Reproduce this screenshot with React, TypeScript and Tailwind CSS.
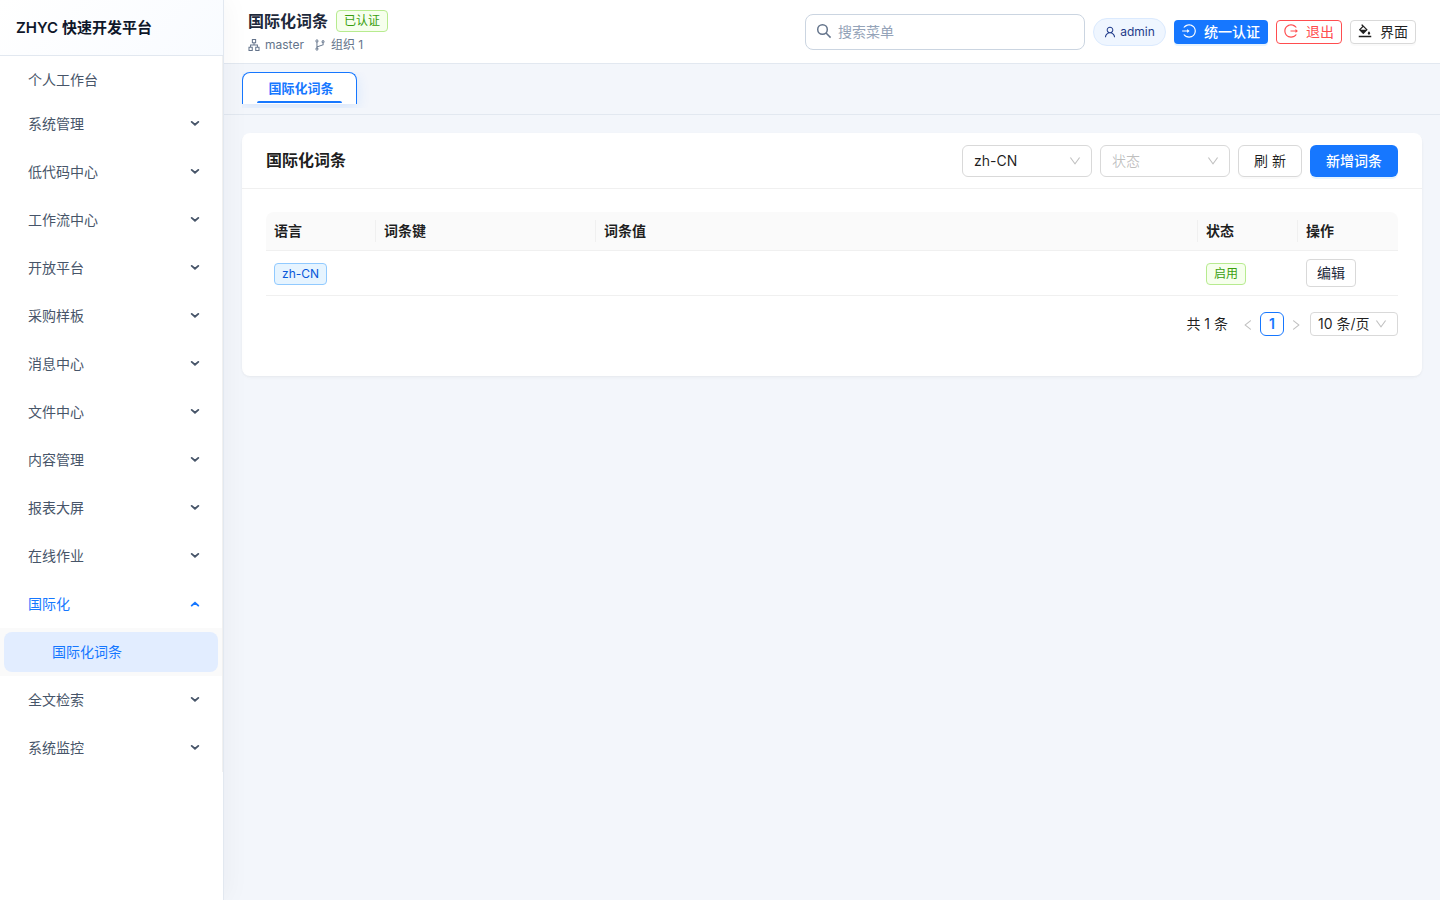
import React from "react";
import type { IconType } from "react-icons";
import {
  AiOutlineApartment,
  AiOutlineBgColors,
  AiOutlineBranches,
  AiOutlineDown,
  AiOutlineLeft,
  AiOutlineLogin,
  AiOutlineLogout,
  AiOutlineRight,
  AiOutlineSearch,
  AiOutlineUser,
} from "react-icons/ai";

const groupsBefore = [
  "系统管理",
  "低代码中心",
  "工作流中心",
  "开放平台",
  "采购样板",
  "消息中心",
  "文件中心",
  "内容管理",
  "报表大屏",
  "在线作业",
];
const groupsAfter = ["全文检索", "系统监控"];

function Icon({ as: Glyph, className }: { as: IconType; className: string }) {
  return <Glyph viewBox="64 64 896 896" className={className} />;
}

function Chevron({ up = false }: { up?: boolean }) {
  return (
    <svg width="10" height="10" viewBox="0 0 10 10" fill="none" stroke="currentColor" strokeWidth="1.9" strokeLinecap="round">
      <path d={up ? "M1.7 6.6 5 3.7 8.3 6.6" : "M1.7 2.9 5 5.8 8.3 2.9"} />
    </svg>
  );
}

function MenuGroup({ label, open = false }: { label: string; open?: boolean }) {
  return (
    <li className={`my-1 mx-1 flex h-10 items-center justify-between pl-6 pr-[18px] ${open ? "text-[#1677ff]" : "text-[#475569]"}`}>
      <span>{label}</span>
      <Chevron up={open} />
    </li>
  );
}

function Sidebar() {
  return (
    <aside className="relative z-10 flex w-56 shrink-0 flex-col border-r border-[#e2e8f0] bg-white shadow-[4px_0_24px_rgba(15,23,42,0.04)]">
      <div className="flex h-14 shrink-0 items-center border-b border-[#e2e8f0] bg-linear-135 from-white to-[#f8fbff] px-4 text-[15px] font-semibold text-[#0f172a]">
        ZHYC 快速开发平台
      </div>
      <ul className="flex flex-col border-r border-[#f0f0f0]">
        <li className="mx-1 mt-1 flex h-10 items-center pl-6 text-[#475569]">个人工作台</li>
        {groupsBefore.map((g) => (
          <MenuGroup key={g} label={g} />
        ))}
        <MenuGroup label="国际化" open />
        <li className="bg-[#fafafa] px-1 py-1">
          <div className="flex h-10 items-center rounded-lg bg-[#e2edff] pl-12 text-[#1677ff]">国际化词条</div>
        </li>
        {groupsAfter.map((g) => (
          <MenuGroup key={g} label={g} />
        ))}
      </ul>
    </aside>
  );
}

function Header() {
  return (
    <header className="flex h-16 shrink-0 items-center justify-between border-b border-[#e2e8f0] bg-white px-6">
      <div className="flex flex-col">
        <div className="flex h-[22px] items-center gap-2">
          <h1 className="text-base leading-[22px] font-semibold text-[#1e293b]">国际化词条</h1>
          <span className="rounded border border-[#b7eb8f] bg-[#f6ffed] px-[7px] text-xs leading-5 text-[#389e0d]">已认证</span>
        </div>
        <div className="mt-1 flex h-[18px] items-center text-xs text-[#64748b]">
          <Icon as={AiOutlineApartment} className="size-3" />
          <span className="ml-[5px]">master</span>
          <Icon as={AiOutlineBranches} className="ml-2.5 size-3" />
          <span className="ml-[5px]">组织 1</span>
        </div>
      </div>
      <div className="flex items-center gap-2">
        <div className="flex h-9 w-[280px] items-center gap-[7px] rounded-lg border border-[#cbd5e1] bg-white px-2.5">
          <svg viewBox="0 0 16 16" className="mb-px size-4 text-[#64748b]" fill="none" stroke="currentColor" strokeWidth="1.5">
            <circle cx="6.5" cy="6.5" r="4.8" />
            <path d="m10 10 4.6 4.6" />
          </svg>
          <span className="-ml-px text-[#94a3b8]">搜索菜单</span>
        </div>
        <div className="flex h-7 w-[73px] items-center justify-center gap-1 rounded-full border border-[#dbeafe] bg-[#eff6ff] text-xs text-[#1e3a8a]">
          <Icon as={AiOutlineUser} className="size-3" />
          <span>admin</span>
        </div>
        <button className="flex h-6 w-[94px] items-center justify-center gap-2 rounded bg-[#1677ff] font-medium text-white shadow-[0_2px_0_rgba(5,145,255,0.1)]">
          <Icon as={AiOutlineLogin} className="mb-0.5 size-3.5" />
          <span>统一认证</span>
        </button>
        <button className="flex h-6 w-[66px] items-center justify-center gap-2 rounded border border-[#ff4d4f] bg-white text-[#ff4d4f]">
          <Icon as={AiOutlineLogout} className="mb-0.5 size-3.5" />
          <span>退出</span>
        </button>
        <button className="flex h-6 w-[66px] items-center justify-center gap-2 rounded border border-[#d9d9d9] bg-white text-black/88 shadow-[0_2px_0_rgba(0,0,0,0.02)]">
          <Icon as={AiOutlineBgColors} className="mb-0.5 size-3.5" />
          <span>界面</span>
        </button>
      </div>
    </header>
  );
}

function Select({ text, muted = false }: { text: string; muted?: boolean }) {
  return (
    <div className="flex h-8 w-[130px] items-center justify-between rounded-md border border-[#d9d9d9] bg-white pl-[11px] pr-2.5">
      <span className={muted ? "text-black/25" : "text-black/88"}>{text}</span>
      <Icon as={AiOutlineDown} className="size-3 text-black/25" />
    </div>
  );
}

function HeadCell({ text, last = false }: { text: string; last?: boolean }) {
  return (
    <div className="flex h-full items-center justify-between pl-2">
      <span>{text}</span>
      {!last && <i className="h-[22px] w-px bg-[#f0f0f0]" />}
    </div>
  );
}

function EntriesCard() {
  return (
    <section className="m-[18px] h-[243px] rounded-lg bg-white shadow-[0_1px_2px_rgba(0,0,0,0.03),0_1px_6px_-1px_rgba(0,0,0,0.02),0_2px_4px_rgba(0,0,0,0.02)]">
      <div className="flex h-14 items-center justify-between border-b border-[#f0f0f0] px-6">
        <h2 className="pb-0.5 text-base font-semibold text-black/88">国际化词条</h2>
        <div className="flex gap-2">
          <Select text="zh-CN" />
          <Select text="状态" muted />
          <button className="h-8 w-16 rounded-md border border-[#d9d9d9] bg-white text-black/88 shadow-[0_2px_0_rgba(0,0,0,0.02)]">刷 新</button>
          <button className="h-8 w-[88px] rounded-md bg-[#1677ff] font-medium text-white shadow-[0_2px_0_rgba(5,145,255,0.1)]">新增词条</button>
        </div>
      </div>
      <div className="px-6 pt-[23px]">
        <div className="grid h-[39px] grid-cols-[110px_220px_602px_100px_100px] items-center rounded-t-lg border-b border-[#f0f0f0] bg-[#fafafa] font-semibold text-black/88">
          <HeadCell text="语言" />
          <HeadCell text="词条键" />
          <HeadCell text="词条值" />
          <HeadCell text="状态" />
          <HeadCell text="操作" last />
        </div>
        <div className="grid h-[45px] grid-cols-[110px_220px_602px_100px_100px] items-center border-b border-[#f0f0f0]">
          <div className="flex pl-2 pt-0.5">
            <span className="rounded border border-[#91caff] bg-[#e6f4ff] px-[7px] text-xs leading-5 text-[#0958d9]">zh-CN</span>
          </div>
          <div />
          <div />
          <div className="flex pl-2 pt-0.5">
            <span className="rounded border border-[#b7eb8f] bg-[#f6ffed] px-[7px] text-xs leading-5 text-[#389e0d]">启用</span>
          </div>
          <div className="pl-2">
            <button className="block h-7 w-[50px] rounded border border-[#d9d9d9] bg-white text-[#1e293b]">编辑</button>
          </div>
        </div>
        <div className="mt-4 flex h-6 items-center justify-end text-black/88">
          <span className="mr-2">共 1 条</span>
          <span className="flex size-6 items-center justify-center pt-0.5 text-black/25">
            <Icon as={AiOutlineLeft} className="size-3" />
          </span>
          <span className="flex size-6 items-center justify-center rounded-md border border-[#1677ff] bg-white font-semibold text-[#1677ff]">1</span>
          <span className="flex size-6 items-center justify-center pt-0.5 text-black/25">
            <Icon as={AiOutlineRight} className="size-3" />
          </span>
          <div className="ml-0.5 flex h-6 w-[88px] items-center justify-between rounded border border-[#d9d9d9] pl-[7px] pr-2.5">
            <span>10 条/页</span>
            <Icon as={AiOutlineDown} className="size-3 text-black/25" />
          </div>
        </div>
      </div>
    </section>
  );
}

export default function App() {
  return (
    <div className="flex h-screen w-screen overflow-hidden bg-[#f3f6fb] font-['Inter','Noto_Sans_CJK_SC',sans-serif] text-sm">
      <Sidebar />
      <div className="flex min-w-0 flex-1 flex-col">
        <Header />
        <div className="h-[51px] shrink-0 border-b border-[#e2e8f0] px-[18px] pt-2">
          <div className="-mr-4 h-9 overflow-hidden">
            <div className="flex h-8 w-[115px] flex-col items-center justify-between rounded-t-lg border border-b-0 border-[#1677ff] bg-white shadow-[0_4px_14px_rgba(22,119,255,0.12)]">
              <span className="pt-1 pl-[3px] text-[13px] leading-[22px] font-bold text-[#1677ff]">国际化词条</span>
              <i className="mb-px h-0.5 w-[85px] rounded-t-sm bg-[#1677ff]" />
            </div>
          </div>
        </div>
        <EntriesCard />
      </div>
    </div>
  );
}
